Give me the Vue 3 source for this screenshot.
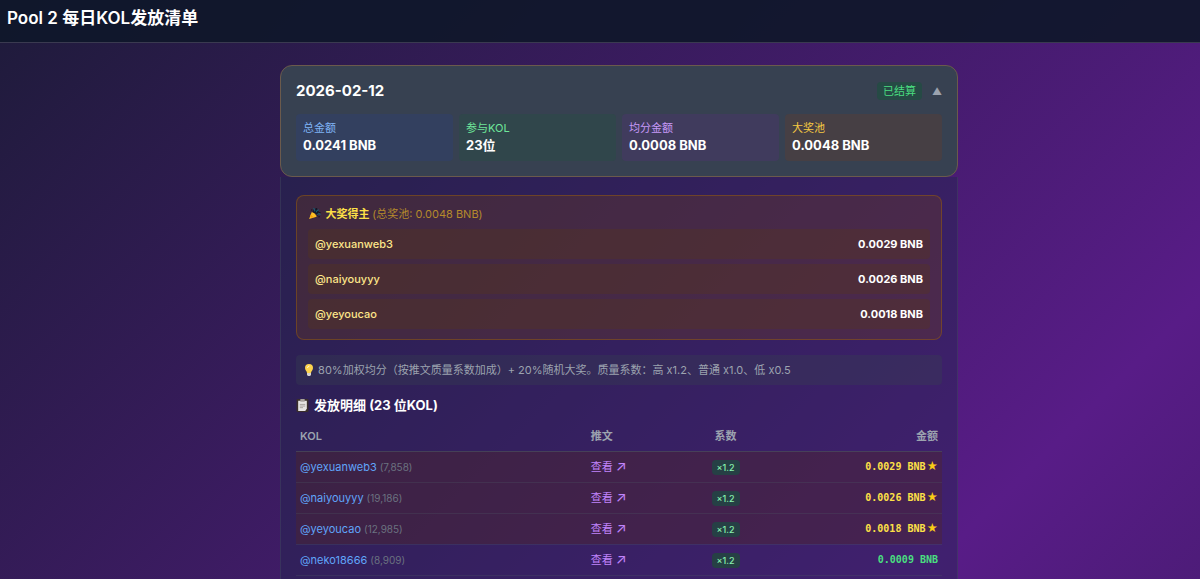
<script setup>
import { ref } from 'vue';

const opened = ref(true);

const day = {
    date: '2026-02-12',
    status: '已结算',
    count: 23,
    jackpot: '0.0048 BNB',
};

const stats = [
    { label: '总金额', value: '0.0241 BNB', color: 'blue' },
    { label: '参与KOL', value: '23位', color: 'green' },
    { label: '均分金额', value: '0.0008 BNB', color: 'purple' },
    { label: '大奖池', value: '0.0048 BNB', color: 'yellow' },
];

const kols = [
    { name: 'yexuanweb3', followers: 7858, factor: '1.2', amount: '0.0029 BNB', winner: true },
    { name: 'naiyouyyy', followers: 19186, factor: '1.2', amount: '0.0026 BNB', winner: true },
    { name: 'yeyoucao', followers: 12985, factor: '1.2', amount: '0.0018 BNB', winner: true },
    { name: 'neko18666', followers: 8909, factor: '1.2', amount: '0.0009 BNB', winner: false },
];

const winners = kols.filter((kol) => kol.winner);
const formatCount = (nb) => nb.toLocaleString('en-US');
</script>

<template>
    <div class="page">
        <header class="topbar">
            <h1>Pool 2 每日KOL发放清单</h1>
        </header>

        <main class="content">
            <section class="day">
                <div class="day-head">
                    <h2>{{ day.date }}</h2>
                    <span class="status">{{ day.status }}</span>
                    <button type="button" class="toggle" :aria-expanded="opened" aria-label="展开" @click="opened = !opened">{{ opened ? '▲' : '▼' }}</button>
                </div>
                <div class="stats">
                    <div v-for="stat in stats" :key="stat.label" class="stat" :class="stat.color">
                        <span class="stat-label">{{ stat.label }}</span>
                        <strong>{{ stat.value }}</strong>
                    </div>
                </div>
            </section>

            <section v-if="opened" class="details">
                <div class="jackpot">
                    <h3>
                        <svg class="emoji" viewBox="0 0 24 24" aria-hidden="true">
                            <path d="M2 22 7 9q7 2 9 9z" fill="#fbbf24" />
                            <path d="m5 14 5 5-3 1-3-3z" fill="#f59e0b" />
                            <path d="M8 9q3-6 8-5l4 4-2 9q-1-5-10-8" fill="#111827" />
                            <path d="M10 2q4 3 2 6M15 10q1-4 5-5M17 14q3-3 6 0" fill="none" stroke="#155e75" stroke-width="2" />
                            <path d="M14 2h3v3h-3zM20 9h3v2h-3zM6 4h2v3H6zM19 17h3v2h-3z" fill="#111827" />
                        </svg>
                        大奖得主 <small>(总奖池: {{ day.jackpot }})</small>
                    </h3>
                    <ul>
                        <li v-for="kol in winners" :key="kol.name">
                            <span>@{{ kol.name }}</span>
                            <strong>{{ kol.amount }}</strong>
                        </li>
                    </ul>
                </div>

                <p class="rule">
                    <svg class="emoji" viewBox="0 0 24 24" aria-hidden="true">
                        <path d="M12 0a8 8 0 0 0-8 8c0 5 4 6 4 10h8c0-4 4-5 4-10a8 8 0 0 0-8-8" fill="#fcd34d" />
                        <path d="M9 8q0-4 4-4" fill="none" stroke="#fff7d6" stroke-width="2" />
                        <path d="M8 18h8v4l-2 2h-4l-2-2z" fill="#d6d3d1" />
                    </svg>
                    80%加权均分（按推文质量系数加成）+ 20%随机大奖。质量系数：高 x1.2、普通 x1.0、低 x0.5
                </p>

                <h3 class="list-title">
                    <svg class="emoji" viewBox="0 0 24 24" aria-hidden="true">
                        <rect x="1" y="0" width="22" height="24" rx="2" fill="#3b2f2c" />
                        <path d="M4 3h16v15l-3 4H4z" fill="#e7e5e4" />
                        <path d="M8 0h8v5H8z" fill="#a8a29e" />
                        <path d="M7 10h10M7 13h10M7 16h6" stroke="#78716c" stroke-width="1" />
                    </svg>
                    发放明细 ({{ day.count }} 位KOL)
                </h3>

                <table>
                    <thead>
                        <tr>
                            <th class="col-kol">KOL</th>
                            <th class="col-tweet">推文</th>
                            <th class="col-factor">系数</th>
                            <th class="col-amount">金额</th>
                        </tr>
                    </thead>
                    <tbody>
                        <tr v-for="kol in kols" :key="kol.name" :class="{ winner: kol.winner }">
                            <td>
                                <a href="#" class="name">@{{ kol.name }}</a>
                                <span class="followers">({{ formatCount(kol.followers) }})</span>
                            </td>
                            <td><a href="#" class="tweet">查看 <span class="arrow">↗</span></a></td>
                            <td class="col-factor"><span class="factor">×{{ kol.factor }}</span></td>
                            <td class="col-amount">
                                <span class="amount">{{ kol.amount }}</span><span v-if="kol.winner" class="star">★</span>
                            </td>
                        </tr>
                    </tbody>
                </table>
            </section>
        </main>
    </div>
</template>

<style>
body {
    background: #1e1b3a;
}
</style>

<style scoped>
* {
    box-sizing: border-box;
    margin: 0;
    padding: 0;
}

.page {
    display: flex;
    flex-direction: column;
    min-height: 100vh;
    background: linear-gradient(135deg, #1e1b3a, #581c87 1060px, #1e1b3a 2120px);
    color: #fff;
    font-family: Inter, "Noto Sans CJK SC", sans-serif;
    font-size: 11px;
    line-height: 16px;
}

.topbar {
    padding: 7px 7px 13px;
    background: rgba(15, 23, 42, 0.92);
    border-bottom: 1px solid #3a3a50;
}

h1 {
    font-size: 17px;
    font-weight: 600;
    line-height: 22px;
}

.content {
    display: flex;
    flex: 1;
    flex-direction: column;
    width: 100%;
    max-width: 716px;
    margin: 0 auto;
    padding: 22px 0 0 38px;
}

.day {
    padding: 15px;
    background: #374151;
    border: 1px solid #6b5a4c;
    border-radius: 12px;
}

.day-head {
    display: flex;
    align-items: center;
    margin-bottom: 13px;
}

h2 {
    flex: 1;
    font-size: 15px;
    line-height: 20px;
}

.status {
    padding: 1px 6px;
    background: #264a45;
    border-radius: 4px;
    color: #4ade80;
}

.toggle {
    margin-left: 10px;
    background: none;
    border: 0;
    color: #9ca3af;
    font: inherit;
    font-size: 10px;
    cursor: pointer;
}

.stats {
    display: grid;
    grid-template-columns: repeat(4, 1fr);
    gap: 6px;
}

.stat {
    display: flex;
    flex-direction: column;
    padding: 6px 7px 7px;
    border-radius: 4px;
}

.stat strong {
    font-size: 13px;
    line-height: 18px;
}

.stat.blue {
    background: #33405f;
}

.stat.green {
    background: #30464b;
}

.stat.purple {
    background: #403b5d;
}

.stat.yellow {
    background: #463f44;
}

.blue .stat-label {
    color: #7fb3f5;
}

.green .stat-label {
    color: #6ee79a;
}

.purple .stat-label {
    color: #c799f8;
}

.yellow .stat-label {
    color: #f5c842;
}

.details {
    flex: 1;
    padding: 18px 15px 0;
    background: rgba(31, 41, 75, 0.4);
    border: 1px solid rgba(75, 85, 99, 0.35);
    border-width: 0 1px;
}

.emoji {
    width: 13px;
    height: 13px;
    margin-right: 2px;
    vertical-align: -2px;
}

.jackpot {
    padding: 10px 11px;
    background: rgba(113, 63, 26, 0.32);
    border: 1px solid rgba(161, 98, 7, 0.45);
    border-radius: 8px;
}

.jackpot h3 {
    margin-bottom: 7px;
    color: #fde047;
    font-size: 11px;
}

.jackpot small {
    color: #b58a2c;
    font-size: 11px;
    font-weight: 400;
}

ul {
    display: grid;
    gap: 5px;
    list-style: none;
}

li {
    display: flex;
    align-items: center;
    justify-content: space-between;
    padding: 7px;
    background: rgba(90, 56, 20, 0.3);
    border-radius: 4px;
    color: #fde68a;
    font-weight: 500;
}

li strong {
    color: #fff;
}

.rule {
    margin: 15px 0 11px;
    padding: 7px;
    background: rgba(55, 65, 81, 0.35);
    border-radius: 4px;
    color: #9ca3af;
}

.rule .emoji {
    width: 12px;
    height: 12px;
    margin: 0;
}

.list-title {
    margin-bottom: 7px;
    font-size: 13px;
    line-height: 18px;
}

table {
    width: 100%;
    border-collapse: collapse;
    table-layout: fixed;
}

th,
td {
    height: 31px;
    padding: 0 4px;
    border-bottom: 1px solid rgba(75, 85, 99, 0.3);
    text-align: left;
}

th {
    height: 30px;
    border-color: rgba(75, 85, 99, 0.6);
    color: #9ca3af;
    font-weight: 600;
}

.col-kol {
    width: 45%;
}

.col-tweet {
    width: 15%;
}

.col-factor {
    width: 13%;
    text-align: center;
}

.col-amount {
    text-align: right;
}

tr.winner {
    background: rgba(80, 38, 40, 0.4);
}

a {
    text-decoration: none;
}

.name {
    color: #60a5fa;
}

.followers {
    margin-left: 3px;
    color: #6b7280;
    font-size: 10px;
}

.tweet {
    color: #c084fc;
}

.arrow {
    font-size: 14px;
}

.factor {
    display: inline-block;
    padding: 0 5px;
    background: #264045;
    border-radius: 4px;
    color: #86efac;
    font-size: 9px;
    font-weight: 500;
    line-height: 15px;
}

.amount {
    color: #4ade80;
    font-family: "DejaVu Sans Mono", monospace;
    font-size: 10px;
    font-weight: 700;
}

.winner .amount {
    color: #fde047;
}

.star {
    margin-left: 1px;
    color: #facc15;
    font-size: 11px;
}
</style>
